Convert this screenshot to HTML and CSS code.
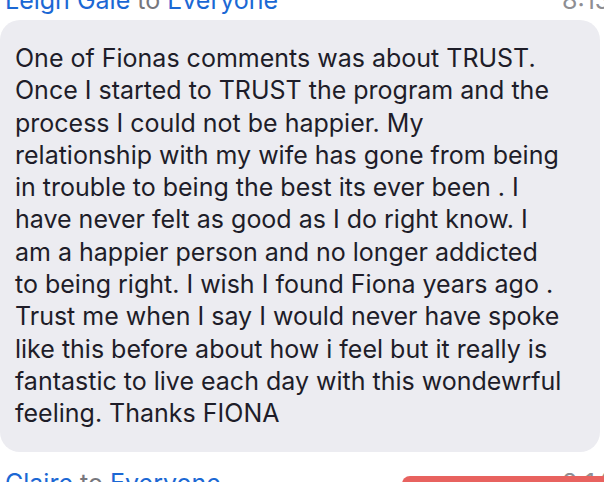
FILE: index.html
```html
<!DOCTYPE html>
<html>
<head>
<meta charset="utf-8">
<link rel="stylesheet" href="styles.css">
</head>
<body>
<div class="chat">
  <div class="msg-head first">
    <span class="who"><span class="name">Leigh Gale</span> <span class="to">to</span> <span class="name">Everyone</span></span>
    <span class="time">8:13</span>
  </div>
  <div class="bubble">One of Fionas comments was about TRUST.<br>Once I started to TRUST the program and the<br>process I could not be happier. My<br>relationship with my wife has gone from being<br>in trouble to being the best its ever been . I<br>have never felt as good as I do right know. I<br>am a happier person and no longer addicted<br>to being right. I wish I found Fiona years ago .<br>Trust me when I say I would never have spoke<br>like this before about how i feel but it really is<br>fantastic to live each day with this wondewrful<br>feeling. Thanks FIONA</div>
  <div class="msg-head next">
    <span class="who"><span class="name">Claire</span> <span class="to">to</span> <span class="name">Everyone</span></span>
    <span class="time">8:14</span>
  </div>
</div>
<div class="toast"></div>
</body>
</html>
```

FILE: styles.css
```css
html, body {
  margin: 0;
  padding: 0;
  background: #ffffff;
  overflow: hidden;
  width: 604px;
  height: 482px;
}
body {
  position: relative;
  font-family: Inter, "Noto Sans", sans-serif;
}
.chat {
  width: 614px;
  margin-top: -15px;
}
.msg-head {
  display: flex;
  justify-content: space-between;
  align-items: baseline;
  padding-left: 5px;
  font-size: 25px;
  line-height: 30px;
}
.msg-head.next {
  margin-top: 16px;
}
.name {
  color: #1b68d4;
}
.to {
  color: #77777d;
}
.time {
  color: #8e8e93;
  width: 52px;
}
.bubble {
  margin-top: 5px;
  width: 600px;
  box-sizing: border-box;
  background: #ececf1;
  border-radius: 20px;
  padding: 22px 10px 22px 15px;
  color: #1e1d29;
  font-size: 25px;
  line-height: 32.3px;
  white-space: nowrap;
}
.toast {
  position: absolute;
  left: 402px;
  top: 476px;
  width: 220px;
  height: 40px;
  background: #e8625f;
  border-radius: 8px;
}
```
